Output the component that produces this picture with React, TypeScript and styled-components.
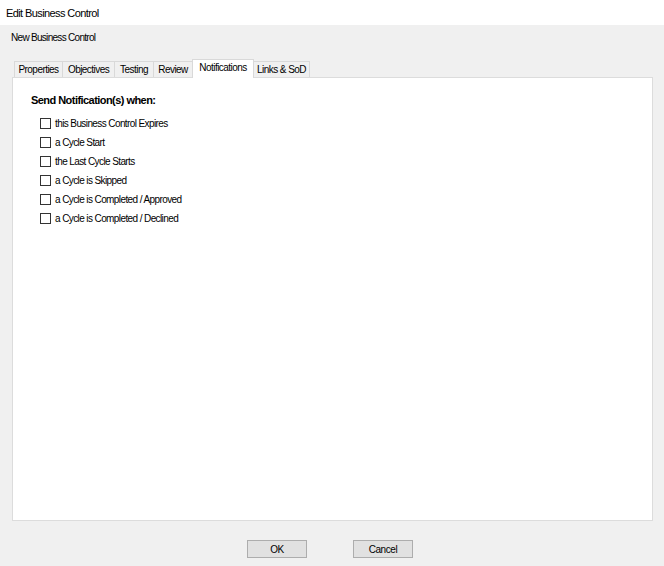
import styled, { createGlobalStyle } from 'styled-components';

const OPTIONS = [
  'this Business Control Expires',
  'a Cycle Start',
  'the Last Cycle Starts',
  'a Cycle is Skipped',
  'a Cycle is Completed / Approved',
  'a Cycle is Completed / Declined',
];

const TABS = [
  { label: 'Properties', width: 49 },
  { label: 'Objectives', width: 53 },
  { label: 'Testing', width: 40 },
  { label: 'Review', width: 40 },
  { label: 'Notifications', width: 62 },
  { label: 'Links & SoD', width: 57 },
];

export default function App() {
  return (
    <>
      <GlobalStyle />
      <Window>
        <TitleBar>Edit Business Control</TitleBar>
        <Body>
          <Subtitle>New Business Control</Subtitle>
          <TabStrip>
            {TABS.map((tab) => (
              <Tab key={tab.label} $width={tab.width} $active={tab.label === 'Notifications'}>
                {tab.label}
              </Tab>
            ))}
          </TabStrip>
          <Panel>
            <Heading>Send Notification(s) when:</Heading>
            <OptionList>
              {OPTIONS.map((option) => (
                <OptionRow key={option}>
                  <CheckBox type="checkbox" />
                  {option}
                </OptionRow>
              ))}
            </OptionList>
          </Panel>
          <Footer>
            <Button>OK</Button>
            <Button>Cancel</Button>
          </Footer>
        </Body>
      </Window>
    </>
  );
}

const GlobalStyle = createGlobalStyle`
  html, body {
    margin: 0;
    padding: 0;
    background: #ffffff;
  }

  body {
    font-family: "Liberation Sans", Arial, sans-serif;
    font-size: 11px;
    color: #000000;
  }
`;

const Window = styled.div`
  display: flex;
  flex-direction: column;

  width: 664px;
  height: 566px;
`;

const TitleBar = styled.div`
  display: flex;
  align-items: center;

  height: 25px;
  padding-left: 6px;

  background: #ffffff;

  font-size: 11px;
  letter-spacing: -0.6px;
`;

const Body = styled.div`
  display: flex;
  flex: 1;
  flex-direction: column;

  padding: 6px 11px 0 12px;

  background: #f0f0f0;
`;

const Subtitle = styled.div`
  height: 14px;
  line-height: 14px;
  margin-left: -1px;

  font-size: 10px;
  letter-spacing: -0.7px;
`;

const TabStrip = styled.div`
  display: flex;
  align-items: flex-end;

  height: 18px;
  margin-top: 14px;
  padding-left: 2px;
`;

const Tab = styled.div<{ $active?: boolean; $width: number }>`
  position: relative;
  z-index: ${({ $active }) => ($active ? 1 : 0)};

  display: flex;
  align-items: center;
  justify-content: center;

  width: ${({ $width }) => $width}px;
  height: ${({ $active }) => ($active ? '19px' : '16px')};
  box-sizing: border-box;
  padding-bottom: ${({ $active }) => ($active ? '3px' : '0')};
  border: 1px solid #d9d9d9;
  border-bottom: none;
  margin-right: -1px;
  margin-bottom: ${({ $active }) => ($active ? '-1px' : '0')};

  background: ${({ $active }) => ($active ? '#ffffff' : '#f0f0f0')};

  font-size: 10px;
  letter-spacing: -0.55px;
  white-space: nowrap;
`;

const Panel = styled.div`
  display: flex;
  flex-direction: column;

  height: 444px;
  box-sizing: border-box;
  padding: 15px 0 0 18px;
  border: 1px solid #dcdcdc;

  background: #ffffff;
`;

const Heading = styled.div`
  height: 14px;
  line-height: 14px;

  font-size: 11px;
  font-weight: 700;
  letter-spacing: -0.55px;
`;

const OptionList = styled.div`
  display: flex;
  flex-direction: column;

  margin-top: 7px;
  padding-left: 9px;
`;

const OptionRow = styled.label`
  display: flex;
  align-items: center;

  height: 19px;

  font-size: 10px;
  letter-spacing: -0.6px;
`;

const CheckBox = styled.input`
  appearance: none;

  width: 11px;
  height: 11px;
  margin: 0 4px 0 0;
  border: 1px solid #333333;

  background: #ffffff;
`;

const Footer = styled.div`
  display: flex;
  justify-content: center;
  gap: 46px;

  padding-top: 19px;
  padding-right: 5px;
`;

const Button = styled.button`
  width: 60px;
  height: 18px;
  padding: 0;
  border: 1px solid #adadad;

  background: #e1e1e1;

  font-family: "Liberation Sans", Arial, sans-serif;
  font-size: 10px;
  letter-spacing: -0.4px;
  color: #000000;
`;
